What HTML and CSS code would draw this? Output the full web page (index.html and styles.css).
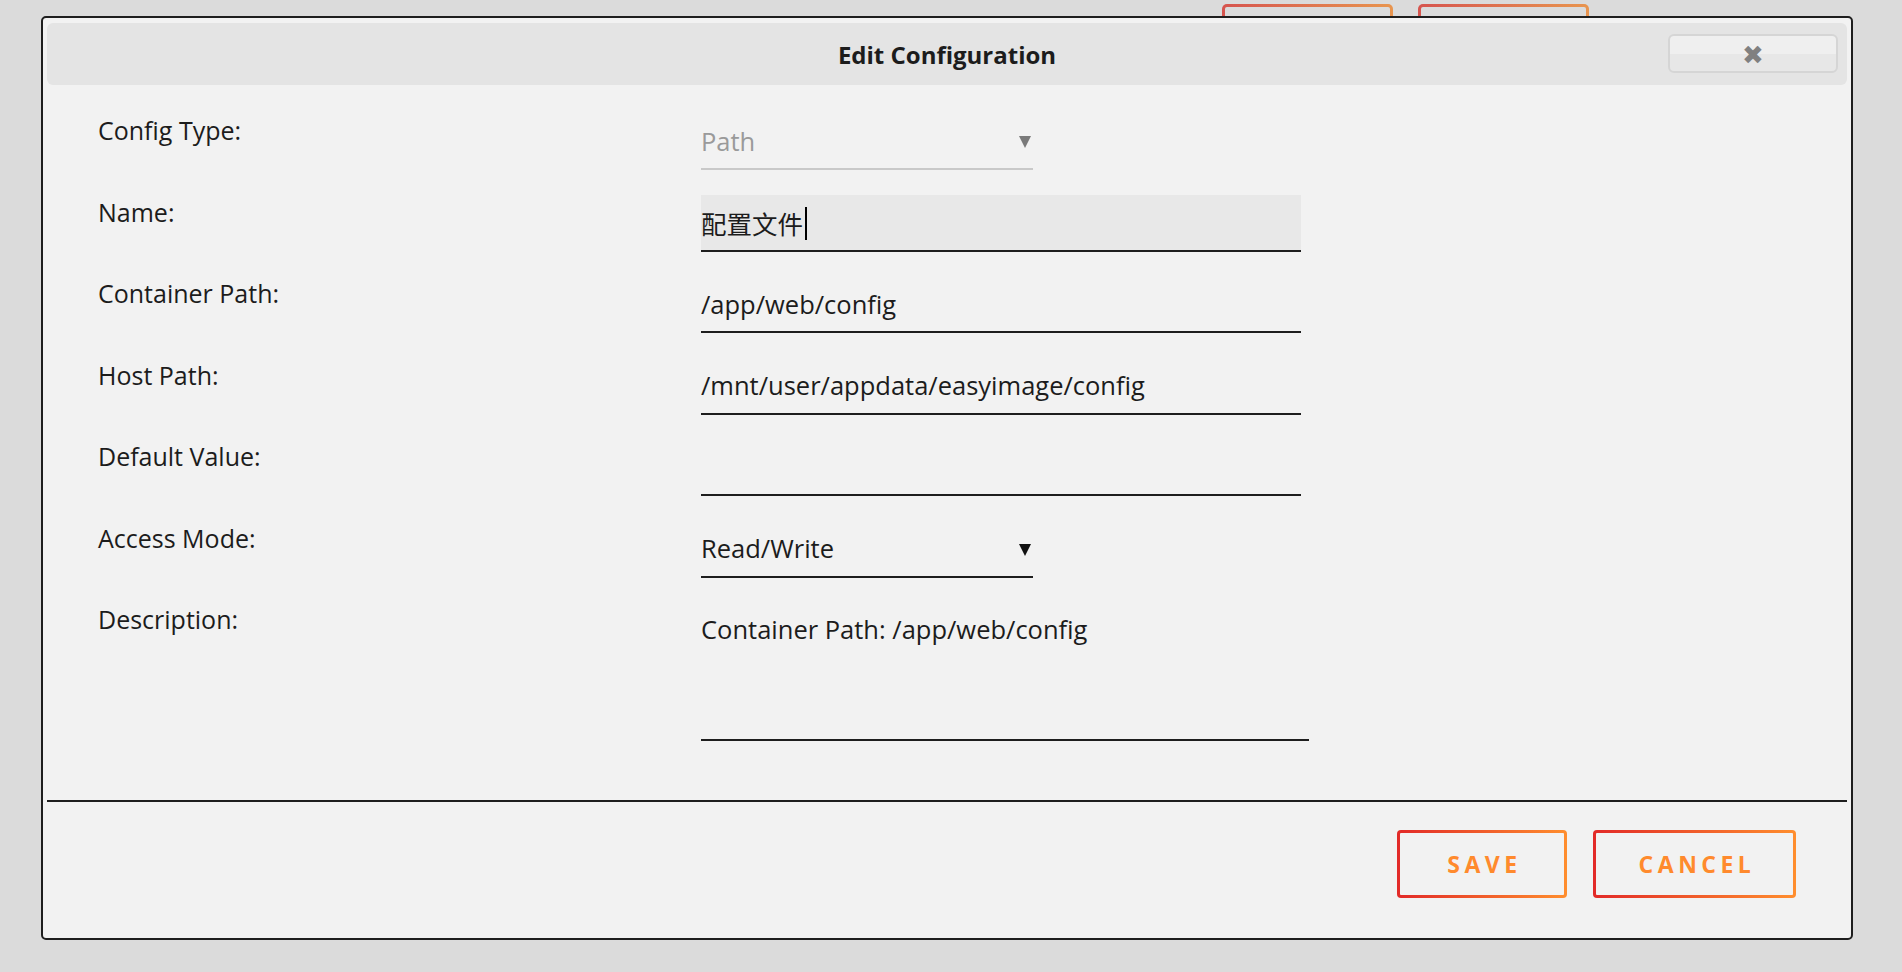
FILE: index.html
```html
<!DOCTYPE html>
<html lang="en">

<head>
  <meta charset="UTF-8">
  <meta name="viewport" content="width=device-width, initial-scale=1.0">
  <title>Edit Configuration</title>
  <link rel="stylesheet" href="styles.css">
</head>

<body>
  <div class="toolbar">
    <button class="ghost-btn"></button>
    <button class="ghost-btn"></button>
  </div>

  <div class="dialog">
    <div class="dialog-head">
      <span class="dialog-title">Edit Configuration</span>
      <button class="close-btn">&#10006;</button>
    </div>

    <form class="form">
      <div class="row">
        <label class="label">Config Type:</label>
        <span class="select-wrap disabled">
          <select class="field select" disabled>
            <option>Path</option>
          </select>
        </span>
      </div>
      <div class="row">
        <label class="label">Name:</label>
        <span class="input-wrap">
          <input class="field wide focus" type="text" value="配置文件">
          <span class="caret"></span>
        </span>
      </div>
      <div class="row">
        <label class="label">Container Path:</label>
        <input class="field wide" type="text" value="/app/web/config">
      </div>
      <div class="row">
        <label class="label">Host Path:</label>
        <input class="field wide" type="text" value="/mnt/user/appdata/easyimage/config">
      </div>
      <div class="row">
        <label class="label">Default Value:</label>
        <input class="field wide" type="text" value="">
      </div>
      <div class="row">
        <label class="label">Access Mode:</label>
        <span class="select-wrap">
          <select class="field select">
            <option>Read/Write</option>
          </select>
        </span>
      </div>
      <div class="row row-desc">
        <label class="label">Description:</label>
        <textarea class="field desc">Container Path: /app/web/config</textarea>
      </div>
    </form>

    <div class="dialog-foot">
      <button class="btn btn-save">SAVE</button>
      <button class="btn btn-cancel">CANCEL</button>
    </div>
  </div>
</body>

</html>
```

FILE: styles.css
```css
body {
  margin: 0;
  padding: 0;
  background: #dbdbdb;
  font-family: "Open Sans", "Noto Sans CJK SC", sans-serif;
  color: #1c1c1c;
}

/* buttons of the page lying under the dialog */
.toolbar {
  display: flex;
  gap: 25px;
  padding: 4px 0 0 1222px;
}

.ghost-btn {
  width: 171px;
  height: 40px;
  border: 3px solid transparent;
  border-radius: 5px;
  background: linear-gradient(#dbdbdb, #dbdbdb) padding-box,
    linear-gradient(90deg, #d6544e, #e8954f) border-box;
}

.dialog {
  position: absolute;
  left: 41px;
  top: 16px;
  width: 1812px;
  height: 924px;
  box-sizing: border-box;
  border: 2px solid #1e1e1e;
  border-radius: 5px;
  background: #f2f2f2;
  padding: 5px 4px 0;
}

.dialog-head {
  position: relative;
  height: 62px;
  background: #e4e4e4;
  border-radius: 6px;
  display: flex;
  align-items: center;
  justify-content: center;
}

.dialog-title {
  font-size: 24px;
  font-weight: bold;
  color: #1c1c1c;
}

.close-btn {
  position: absolute;
  right: 9px;
  top: 11px;
  width: 170px;
  height: 39px;
  border: 2px solid #d5d5d5;
  border-radius: 6px;
  background: linear-gradient(#efefef 50%, #e7e7e7 50%);
  color: #808080;
  font-size: 26px;
  line-height: 1;
  padding: 3px 0 0;
  font-family: "DejaVu Sans", sans-serif;
}

.form {
  padding: 28px 0 0 51px;
}

.row {
  display: flex;
  height: 81.5px;
}

.label {
  width: 603px;
  font-size: 25px;
  line-height: 24px;
  padding-top: 5px;
  flex: none;
}

.field {
  box-sizing: border-box;
  height: 57px;
  margin: 0;
  padding: 0;
  border: none;
  border-bottom: 2px solid #1e1e1e;
  background: transparent;
  font-family: "Open Sans", "Noto Sans CJK SC", sans-serif;
  font-size: 25.5px;
  color: #1c1c1c;
  outline: none;
  border-radius: 0;
}

.wide {
  width: 600px;
}

.input-wrap {
  position: relative;
  display: block;
  height: 57px;
}

.focus {
  background: #e8e8e8;
}

.caret {
  position: absolute;
  left: 104px;
  top: 12px;
  width: 2px;
  height: 33px;
  background: #000;
}

.select-wrap {
  position: relative;
  display: block;
  width: 332px;
  height: 57px;
}

.select {
  width: 332px;
  appearance: none;
  -webkit-appearance: none;
}

.select-wrap::after {
  content: "";
  position: absolute;
  right: 2px;
  top: 23px;
  border-left: 6px solid transparent;
  border-right: 6px solid transparent;
  border-top: 12px solid #111;
  pointer-events: none;
}

.select-wrap.disabled::after {
  border-top-color: #7a7a7a;
}

.select-wrap.disabled .select {
  color: #9a9a9a;
  border-bottom-color: #c9c9c9;
  opacity: 1;
}

.row-desc {
  height: 198px;
}

.desc {
  width: 608px;
  height: 139px;
  padding-top: 11px;
  resize: none;
  line-height: 32px;
}

.dialog-foot {
  border-top: 2px solid #1e1e1e;
  display: flex;
  justify-content: flex-end;
  gap: 26px;
  padding: 28px 51px 0 0;
}

.btn {
  height: 68px;
  padding: 0 0 0 5px;
  border: 3px solid transparent;
  border-radius: 4px;
  background: linear-gradient(#f2f2f2, #f2f2f2) padding-box,
    linear-gradient(90deg, #e22a28, #ff8e2e) border-box;
  color: #ff8a2d;
  font-family: "Open Sans", sans-serif;
  font-weight: bold;
  font-size: 23px;
  letter-spacing: 4.5px;
}

.btn-save {
  width: 170px;
}

.btn-cancel {
  width: 203px;
}
```
